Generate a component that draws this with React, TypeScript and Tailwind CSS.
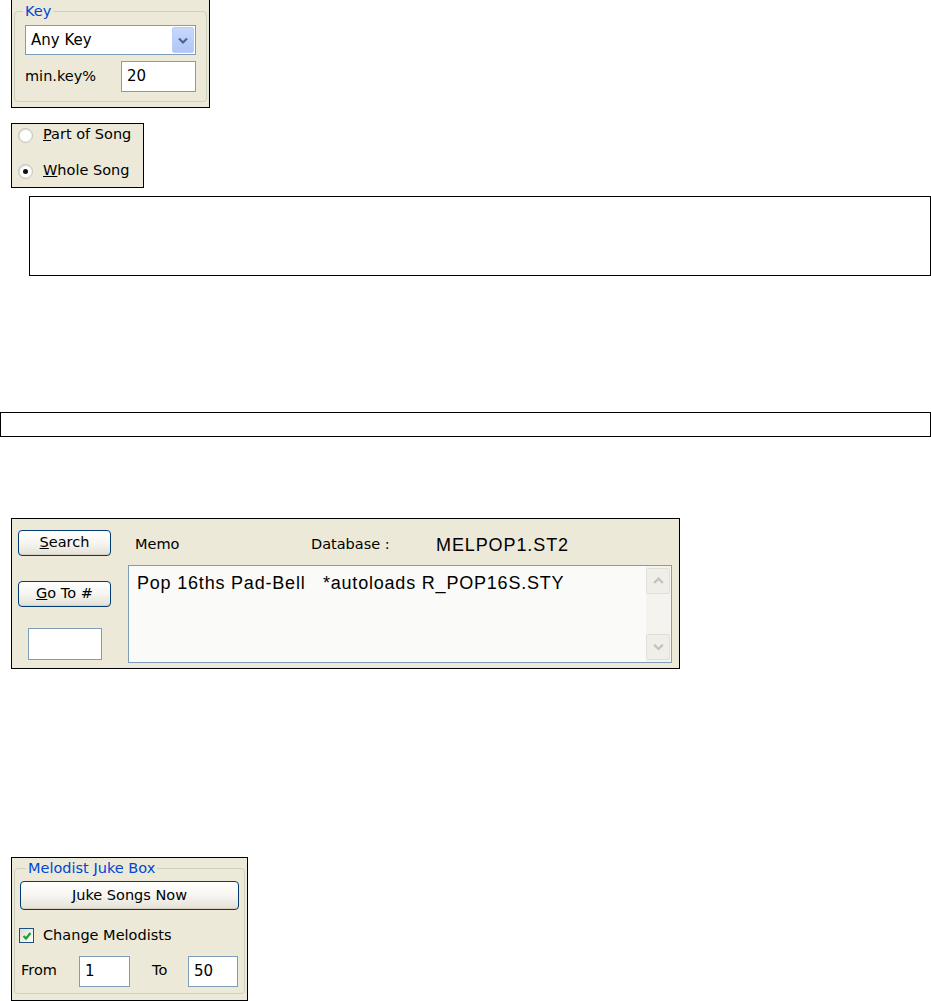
import React from "react";

const tahoma = { fontFamily: '"DejaVu Sans", Verdana, sans-serif' };
const arial = { fontFamily: '"Liberation Sans", Arial, sans-serif' };

function Chevron({ down = true, color = "#4D6185", size = 10 }: { down?: boolean; color?: string; size?: number }) {
  return (
    <svg width={size} height={size * 0.7} viewBox="0 0 10 7">
      <path
        d={down ? "M1 1.5 L5 5.5 L9 1.5" : "M1 5.5 L5 1.5 L9 5.5"}
        fill="none"
        stroke={color}
        strokeWidth="2"
        strokeLinejoin="miter"
      />
    </svg>
  );
}

function XpButton({ children, className = "" }: { children: React.ReactNode; className?: string }) {
  return (
    <div
      className={`flex items-center justify-center rounded-[4px] border border-[#003C74] bg-gradient-to-b from-white via-[#F6F5F0] to-[#E3E1D6] text-[14.5px] text-black shadow-[inset_0_-1px_0_#D6D0C5] ${className}`}
      style={tahoma}
    >
      {children}
    </div>
  );
}

function Radio({ checked }: { checked?: boolean }) {
  return (
    <div className="flex h-[15px] w-[15px] items-center justify-center rounded-full border border-[#C6C5BC] bg-gradient-to-br from-[#D6D5CC] to-white">
      <div className="flex h-[11px] w-[11px] items-center justify-center rounded-full bg-white">
        {checked && <div className="h-[5px] w-[5px] rounded-full bg-[#111]" />}
      </div>
    </div>
  );
}

function Field({ value, className = "" }: { value?: string; className?: string }) {
  return (
    <div
      className={`flex items-center border border-[#7F9DB9] bg-white pl-[5px] text-[15px] text-black ${className}`}
      style={tahoma}
    >
      {value}
    </div>
  );
}

export default function App() {
  return (
    <div className="flex h-[1001px] w-[931px] flex-col overflow-hidden bg-white text-black" style={tahoma}>
      {/* Key group */}
      <div className="ml-[11px] h-[108px] w-[199px] border-x border-b border-black bg-[#ECE9D8] px-[2px]">
        <fieldset className="m-0 mt-[3px] h-[99px] rounded-[4px] border border-[#D0D0BF] px-[10px] pt-0">
          <legend className="-ml-[2px] px-[2px] text-[14.5px] leading-[16px] text-[#0046D5]">Key</legend>
          <div className="mt-[6px] flex h-[30px] items-center border border-[#7F9DB9] bg-white">
            <span className="flex-1 pl-[5px] text-[15px]">Any Key</span>
            <div className="mr-[1px] flex h-[26px] w-[22px] items-center justify-center rounded-[2px] border border-[#BBCDF8] bg-gradient-to-b from-[#C7D8FC] to-[#B0C6F7]">
              <Chevron />
            </div>
          </div>
          <div className="mt-[6px] flex items-center">
            <span className="w-[96px] text-[14.5px]">min.key%</span>
            <Field value="20" className="h-[31px] w-[75px]" />
          </div>
        </fieldset>
      </div>

      {/* Part / Whole */}
      <div className="ml-[11px] mt-[15px] flex h-[65px] w-[133px] flex-col gap-[18px] border border-black bg-[#ECE9D8] pl-[6px] pt-[2px] text-[14.5px]">
        <div className="flex h-[18px] items-center gap-[10px]">
          <Radio />
          <span>
            <span className="underline">P</span>art of Song
          </span>
        </div>
        <div className="flex h-[18px] items-center gap-[10px]">
          <Radio checked />
          <span>
            <span className="underline">W</span>hole Song
          </span>
        </div>
      </div>

      <div className="ml-[29px] mt-[8px] h-[80px] w-[902px] border border-black bg-white" />

      <div className="mt-[136px] h-[25px] w-[931px] border border-black bg-white" />

      {/* Search panel */}
      <div className="ml-[11px] mt-[81px] flex h-[151px] w-[669px] border border-black bg-[#ECE9D8]">
        <div className="flex w-[110px] flex-col items-start pl-[6px] pt-[11px]">
          <XpButton className="h-[26px] w-[93px]">
            <span>
              <span className="underline">S</span>earch
            </span>
          </XpButton>
          <XpButton className="mt-[25px] h-[26px] w-[93px]">
            <span>
              <span className="underline">G</span>o To #
            </span>
          </XpButton>
          <Field className="ml-[10px] mt-[21px] h-[32px] w-[74px]" />
        </div>
        <div className="flex flex-1 flex-col pl-[6px] pr-[7px]">
          <div className="flex h-[46px] items-center pt-[6px] text-[14.5px]">
            <span className="w-[183px] pl-[7px]">Memo</span>
            <span className="w-[125px]">Database :</span>
            <span className="text-[18px] tracking-[0.9px]" style={arial}>
              MELPOP1.ST2
            </span>
          </div>
          <div className="flex h-[98px] border border-[#7F9DB9] bg-[#FAFAF8]">
            <div className="flex-1 pl-[8px] pt-[4px] text-[18px] tracking-[0.8px] whitespace-pre" style={arial}>
              {"Pop 16ths Pad-Bell   *autoloads R_POP16S.STY"}
            </div>
            <div className="mr-[1px] flex w-[24px] flex-col justify-between bg-[#F4F3EE] py-[2px]">
              <div className="flex h-[26px] items-center justify-center rounded-[2px] border border-[#E2E0D6] bg-[#EFEEE8]">
                <Chevron down={false} color="#C4C3BB" size={11} />
              </div>
              <div className="flex h-[26px] items-center justify-center rounded-[2px] border border-[#E2E0D6] bg-[#EFEEE8]">
                <Chevron color="#C4C3BB" size={11} />
              </div>
            </div>
          </div>
        </div>
      </div>

      {/* Melodist Juke Box */}
      <div className="ml-[11px] mt-[188px] h-[144px] w-[237px] border border-black bg-[#ECE9D8] px-[2px]">
        <fieldset className="m-0 mt-[2px] h-[134px] rounded-[4px] border border-[#D0D0BF] px-[5px] pt-0">
          <legend className="ml-[6px] px-[2px] text-[14.5px] leading-[16px] text-[#0046D5]">Melodist Juke Box</legend>
          <XpButton className="mt-[5px] h-[29px] w-[219px]">
            <span>
              <span className="underline">J</span>uke Songs Now
            </span>
          </XpButton>
          <div className="mt-[15px] flex items-center gap-[9px] text-[14.5px]">
            <div className="ml-[-1px] flex h-[15px] w-[15px] items-center justify-center border border-[#1C5180] bg-gradient-to-br from-[#DCDBD5] to-white">
              <svg width="10" height="10" viewBox="0 0 10 10">
                <path d="M1.5 5 L4 7.5 L8.5 2" fill="none" stroke="#21A121" strokeWidth="2.2" />
              </svg>
            </div>
            <span>Change Melodists</span>
          </div>
          <div className="mt-[9px] flex items-center text-[14.5px]">
            <span className="w-[59px] pl-[1px]">From</span>
            <Field value="1" className="h-[31px] w-[51px]" />
            <span className="w-[58px] pl-[22px]">To</span>
            <Field value="50" className="h-[31px] w-[50px]" />
          </div>
        </fieldset>
      </div>
    </div>
  );
}
